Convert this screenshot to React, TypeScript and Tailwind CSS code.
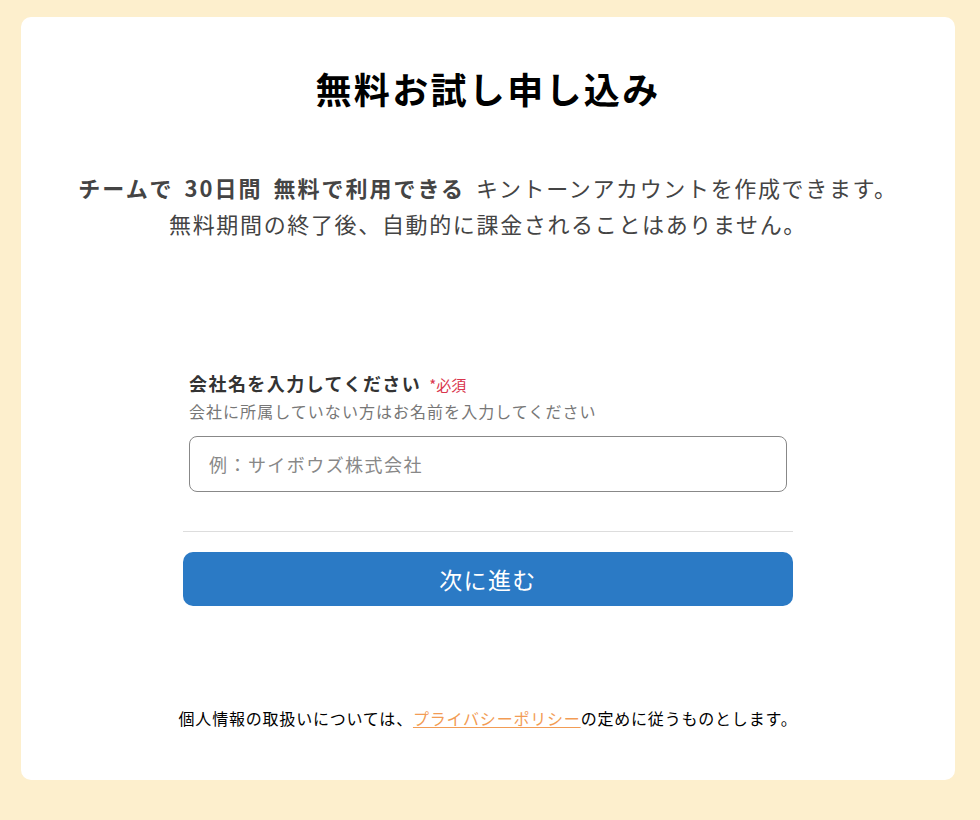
import React from "react";

const jp = { fontFamily: '"Noto Sans CJK JP", "Noto Sans", sans-serif' };

const Gap = () => <span className="inline-block w-[11px]" />;

const App = () => {
  return (
    <div className="min-h-[820px] w-full bg-[#fdefcd] pt-[17px] pl-[21px]" style={jp}>
      <div className="flex h-[763px] w-[934px] flex-col items-center rounded-[10px] bg-white pt-[44px]">
        <h1 className="text-[36px] font-bold leading-[54px] tracking-[0.065em] text-black">
          無料お試し申し込み
        </h1>

        <p className="mt-[54px] text-center text-[22px] leading-[36px] tracking-[0.075em] text-[#444]">
          <span className="font-bold tracking-[0.09em]">チームで</span>
          <Gap />
          <span className="font-bold tracking-[0.09em]">30日間</span>
          <Gap />
          <span className="font-bold tracking-[0.09em]">無料で利用できる</span>
          <Gap />
          キントーンアカウントを作成できます。
          <br />
          無料期間の終了後、自動的に課金されることはありません。
        </p>

        <div className="mt-[129px] flex w-[610px] flex-col">
          <div className="px-[6px]">
            <div className="flex items-baseline gap-[8px] leading-[26px]">
              <span className="text-[18px] font-bold tracking-[0.08em] text-[#333]">会社名を入力してください</span>
              <span className="text-[15px] text-[#d9354d]">*必須</span>
            </div>
            <p className="mt-[1px] text-[16px] leading-[24px] tracking-[0.065em] text-[#777]">
              会社に所属していない方はお名前を入力してください
            </p>
            <input
              type="text"
              placeholder="例：サイボウズ株式会社"
              className="mt-[13px] h-[56px] w-full rounded-[8px] border border-[#888] px-[19px] text-[18px] tracking-[0.08em] text-[#333] outline-none placeholder:text-[#888]"
            />
          </div>

          <div className="mt-[39px] h-px w-full bg-[#ddd]" />

          <button className="mt-[20px] flex h-[54px] w-full items-center justify-center rounded-[10px] bg-[#2b7ac5] text-[23px] tracking-[0.06em] text-white">
            次に進む
          </button>
        </div>

        <p className="mt-[100px] text-[16px] leading-[24px] tracking-[0.05em] text-black">
          個人情報の取扱いについては、
          <a href="#" className="text-[#f29c55] underline underline-offset-2">
            プライバシーポリシー
          </a>
          の定めに従うものとします。
        </p>
      </div>
    </div>
  );
};

export default App;
